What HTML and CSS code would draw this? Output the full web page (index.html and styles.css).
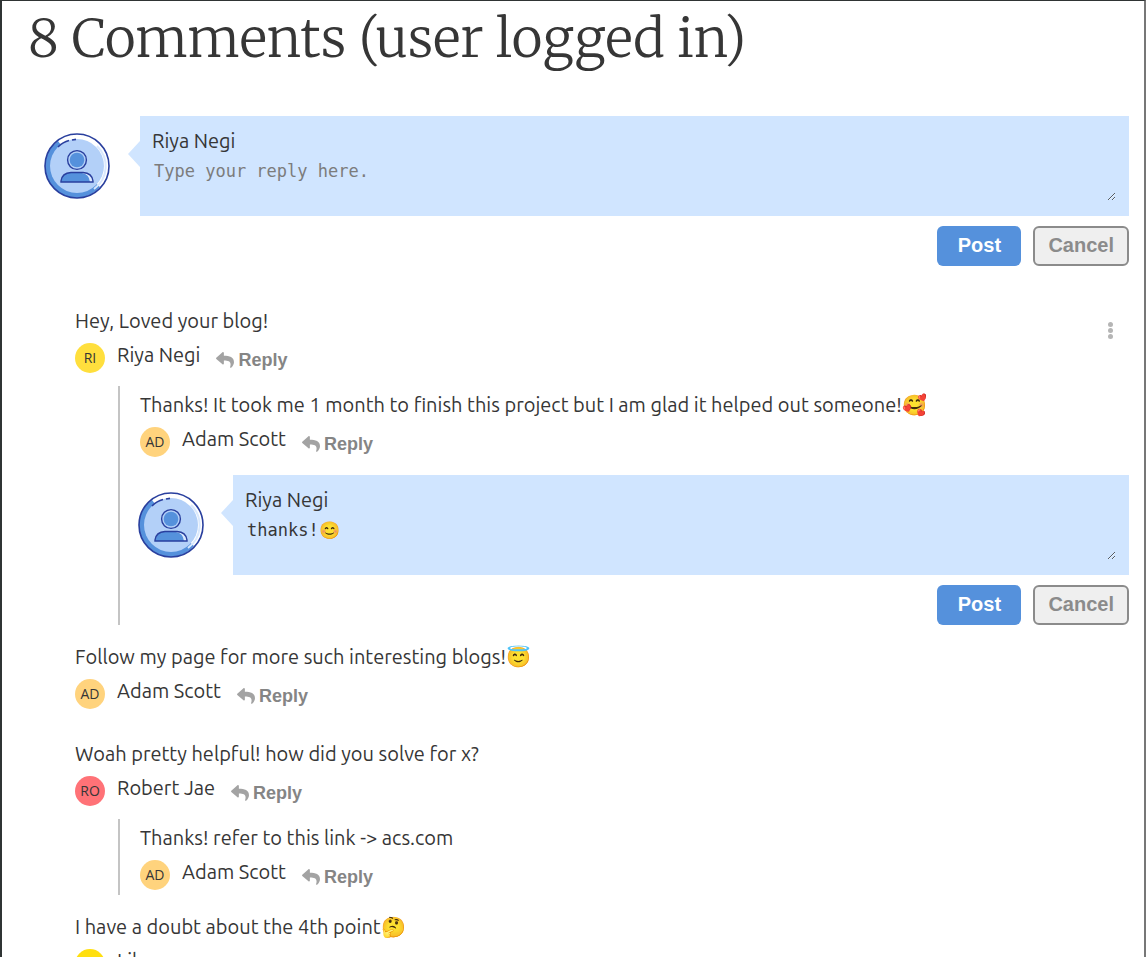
FILE: index.html
```html
<!DOCTYPE html>
<html lang="en">
<head>
<meta charset="utf-8">
<meta name="viewport" content="width=device-width, initial-scale=1">
<title>Comments</title>
<link rel="stylesheet" href="styles.css">
</head>
<body>
<svg class="sprite" aria-hidden="true">
  <symbol id="reply-arrow" viewBox="0 0 512 512">
    <path fill="currentColor" d="M8.3 189.8 184.3 37.9C199.7 24.5 224 35.3 224 56v80c160.600 1.800 288 34 288 186.300 0 61.400-39.600 122.300-83.300 154.100-13.700 9.900-33.100-2.500-28.100-18.600C446 312.900 379.100 274.200 224 272v88c0 20.700-24.300 31.500-39.700 18.200l-176-152c-11.100-9.600-11.100-26.800 0-36.400z"/>
  </symbol>
  <symbol id="user-badge" viewBox="0 0 66 66">
    <circle cx="33" cy="33" r="32" fill="#fff"/>
    <path fill="#5591dc" d="M14 8A32 32 0 0 0 1 33 32 32 0 0 0 33 65 33 33 0 0 0 56 54L33 33z"/>
    <path d="M53 13A28 28 0 0 1 50 56" fill="none" stroke="#d9e8fd" stroke-width="2"/>
    <circle cx="33" cy="33" r="27" fill="#b3d0f8"/>
    <circle cx="33" cy="33" r="32" fill="none" stroke="#293f9e" stroke-width="1.600"/>
    <path d="M14 14Q19 9 25 7.500M28 7l4-.6" fill="none" stroke="#293f9e" stroke-width="1.600"/>
    <circle cx="33" cy="27" r="9.400" fill="#b3d0f8" stroke="#293f9e" stroke-width="1.400"/>
    <circle cx="33" cy="27" r="7.300" fill="#5591dc"/>
    <path d="M17 49v-1q1-8 10-8.500h12q9 .5 10 8.500v1z" fill="#5591dc"/>
    <path d="M38 40q7 1 8 9h3q0-9-10-9.500z" fill="#dceaff"/>
    <path d="M17 49v-1q1-8 10-8.500h12q9 .5 10 8.500v1z" fill="none" stroke="#293f9e" stroke-width="1.400"/>
  </symbol>
</svg>

<main class="page">
  <h1 class="title">8 Comments (user logged in)</h1>

  <form class="composer">
    <svg class="composer-avatar" aria-hidden="true"><use href="#user-badge"/></svg>
    <div class="bubble">
      <label class="author" for="new-comment">Riya Negi</label>
      <textarea class="input" id="new-comment" placeholder="Type your reply here."></textarea>
    </div>
    <div class="actions">
      <button class="btn btn-post" type="button">Post</button>
      <button class="btn btn-cancel" type="button">Cancel</button>
    </div>
  </form>

  <section class="comments">
    <article class="comment">
      <button class="more" type="button" aria-label="More options"><span class="dot"></span><span class="dot"></span><span class="dot"></span></button>
      <p class="text">Hey, Loved your blog!</p>
      <div class="meta">
        <span class="initials yellow">RI</span><span class="author">Riya Negi</span>
        <button class="reply" type="button"><svg class="arrow"><use href="#reply-arrow"/></svg>Reply</button>
      </div>
      <div class="thread">
        <article class="answer">
          <p class="text">Thanks! It took me 1 month to finish this project but I am glad it helped out someone!<span class="emoji">🥰</span></p>
          <div class="meta">
            <span class="initials orange">AD</span><span class="author">Adam Scott</span>
            <button class="reply" type="button"><svg class="arrow"><use href="#reply-arrow"/></svg>Reply</button>
          </div>
        </article>
        <form class="composer composer-nested">
          <svg class="composer-avatar" aria-hidden="true"><use href="#user-badge"/></svg>
          <div class="bubble">
            <label class="author" for="new-reply">Riya Negi</label>
            <textarea class="input" id="new-reply">thanks!😊</textarea>
          </div>
          <div class="actions">
            <button class="btn btn-post" type="button">Post</button>
            <button class="btn btn-cancel" type="button">Cancel</button>
          </div>
        </form>
      </div>
    </article>

    <article class="comment comment-plain">
      <p class="text">Follow my page for more such interesting blogs!<span class="emoji">😇</span></p>
      <div class="meta">
        <span class="initials orange">AD</span><span class="author">Adam Scott</span>
        <button class="reply" type="button"><svg class="arrow"><use href="#reply-arrow"/></svg>Reply</button>
      </div>
    </article>

    <article class="comment">
      <p class="text">Woah pretty helpful! how did you solve for x?</p>
      <div class="meta">
        <span class="initials red">RO</span><span class="author">Robert Jae</span>
        <button class="reply" type="button"><svg class="arrow"><use href="#reply-arrow"/></svg>Reply</button>
      </div>
      <div class="thread">
        <article class="answer answer-last">
          <p class="text">Thanks! refer to this link -&gt; acs.com</p>
          <div class="meta">
            <span class="initials orange">AD</span><span class="author">Adam Scott</span>
            <button class="reply" type="button"><svg class="arrow"><use href="#reply-arrow"/></svg>Reply</button>
          </div>
        </article>
      </div>
    </article>

    <article class="comment">
      <p class="text">I have a doubt about the 4th point<span class="emoji">🤔</span></p>
      <div class="meta">
        <span class="initials lemon"></span><span class="author">Lil</span>
      </div>
    </article>
  </section>
</main>
</body>
</html>
```
FILE: styles.css
```css
* { box-sizing: border-box; }

body {
  margin: 0;
  background: #fff;
  color: #363636;
  font-family: Ubuntu, "Noto Sans", sans-serif;
  font-size: 20px;
  line-height: 24px;
}

.sprite { position: absolute; width: 0; height: 0; }

.page {
  height: 100vh;
  padding: 0 15px 0 26px;
  border: solid #2f3434;
  border-width: 1px 2px 0 2px;
  border-right-color: #777;
  overflow-y: auto;
  scrollbar-width: none;
}

.title {
  margin: 0 0 40px;
  font-family: "Merriweather Light", Merriweather, "Liberation Serif", serif;
  font-size: 53px;
  font-weight: 200;
  line-height: 75px;
}

.composer {
  display: grid;
  grid-template-columns: 66px 1fr;
  column-gap: 30px;
  row-gap: 10px;
  padding-left: 16px;
}

.composer-nested { padding-left: 0; margin-top: 18px; column-gap: 29px; }

.composer-avatar { width: 66px; height: 66px; margin-top: 17px; }

.bubble {
  position: relative;
  display: flex;
  flex-direction: column;
  min-height: 100px;
  padding: 13px 13px 13px 12px;
  background: #d0e5ff;
}

.bubble::before {
  content: "";
  position: absolute;
  left: -12px;
  top: 25px;
  border: solid transparent;
  border-width: 13px 12px 13px 0;
  border-right-color: #d0e5ff;
}

.input {
  display: block;
  width: 100%;
  height: 48px;
  padding: 6px 2px;
  border: 0;
  outline: 0;
  background: transparent;
  color: #363636;
  font-family: "DejaVu Sans Mono", monospace;
  font-size: 17px;
  line-height: 24px;
  overflow: hidden;
  resize: vertical;
}

.input::placeholder { color: #7c7c7c; opacity: 1; }

.actions {
  grid-column: 2;
  display: flex;
  justify-content: flex-end;
  gap: 12px;
}

.btn {
  min-width: 84px;
  height: 40px;
  padding: 0 20px 2px;
  border: 0;
  border-radius: 6px;
  font: bold 20px "Liberation Sans", Arial, sans-serif;
}

.btn-post { background: #5591dc; color: #fff; }

.btn-cancel {
  padding: 0 13px 2px;
  border: 2px solid #8b8b8b;
  background: #efefef;
  color: #8b8b8b;
}

.comments {
  display: flex;
  flex-direction: column;
  gap: 20px;
  margin-top: 43px;
  padding-left: 47px;
}

.comment { position: relative; }
.comment-plain { padding-bottom: 13px; }

.text { margin: 0 0 10px; }

.meta { display: flex; height: 30px; }

.author { line-height: 24px; }

.meta .author { margin: 0 16px 0 12px; }

.initials {
  width: 30px;
  height: 30px;
  border-radius: 50%;
  font-family: "Open Sans", "Noto Sans", sans-serif;
  font-size: 14px;
  line-height: 30px;
  text-align: center;
}

.yellow { background: #ffdf3d; }
.orange { background: #ffd37d; }
.red { background: #ff7277; }
.lemon { background: #ffdf0f; }

.reply {
  display: flex;
  align-items: center;
  gap: 4px;
  padding: 4px 0 0;
  border: 0;
  background: none;
  color: #858585;
  font: bold 18px "Liberation Sans", Arial, sans-serif;
}

.arrow { width: 18px; height: 18px; color: #a3a3a3; }

.thread {
  margin: 13px 0 0 43px;
  padding: 7px 0 0 18px;
  border-left: 2px solid #c4c4c4;
}

.answer { padding-left: 2px; }
.answer-last { padding-bottom: 5px; }

.more {
  position: absolute;
  top: 13px;
  right: 16px;
  display: grid;
  gap: 1px;
  padding: 0;
  border: 0;
  background: none;
}

.dot { width: 5px; height: 5px; border-radius: 50%; background: #b5b5b5; }
```
